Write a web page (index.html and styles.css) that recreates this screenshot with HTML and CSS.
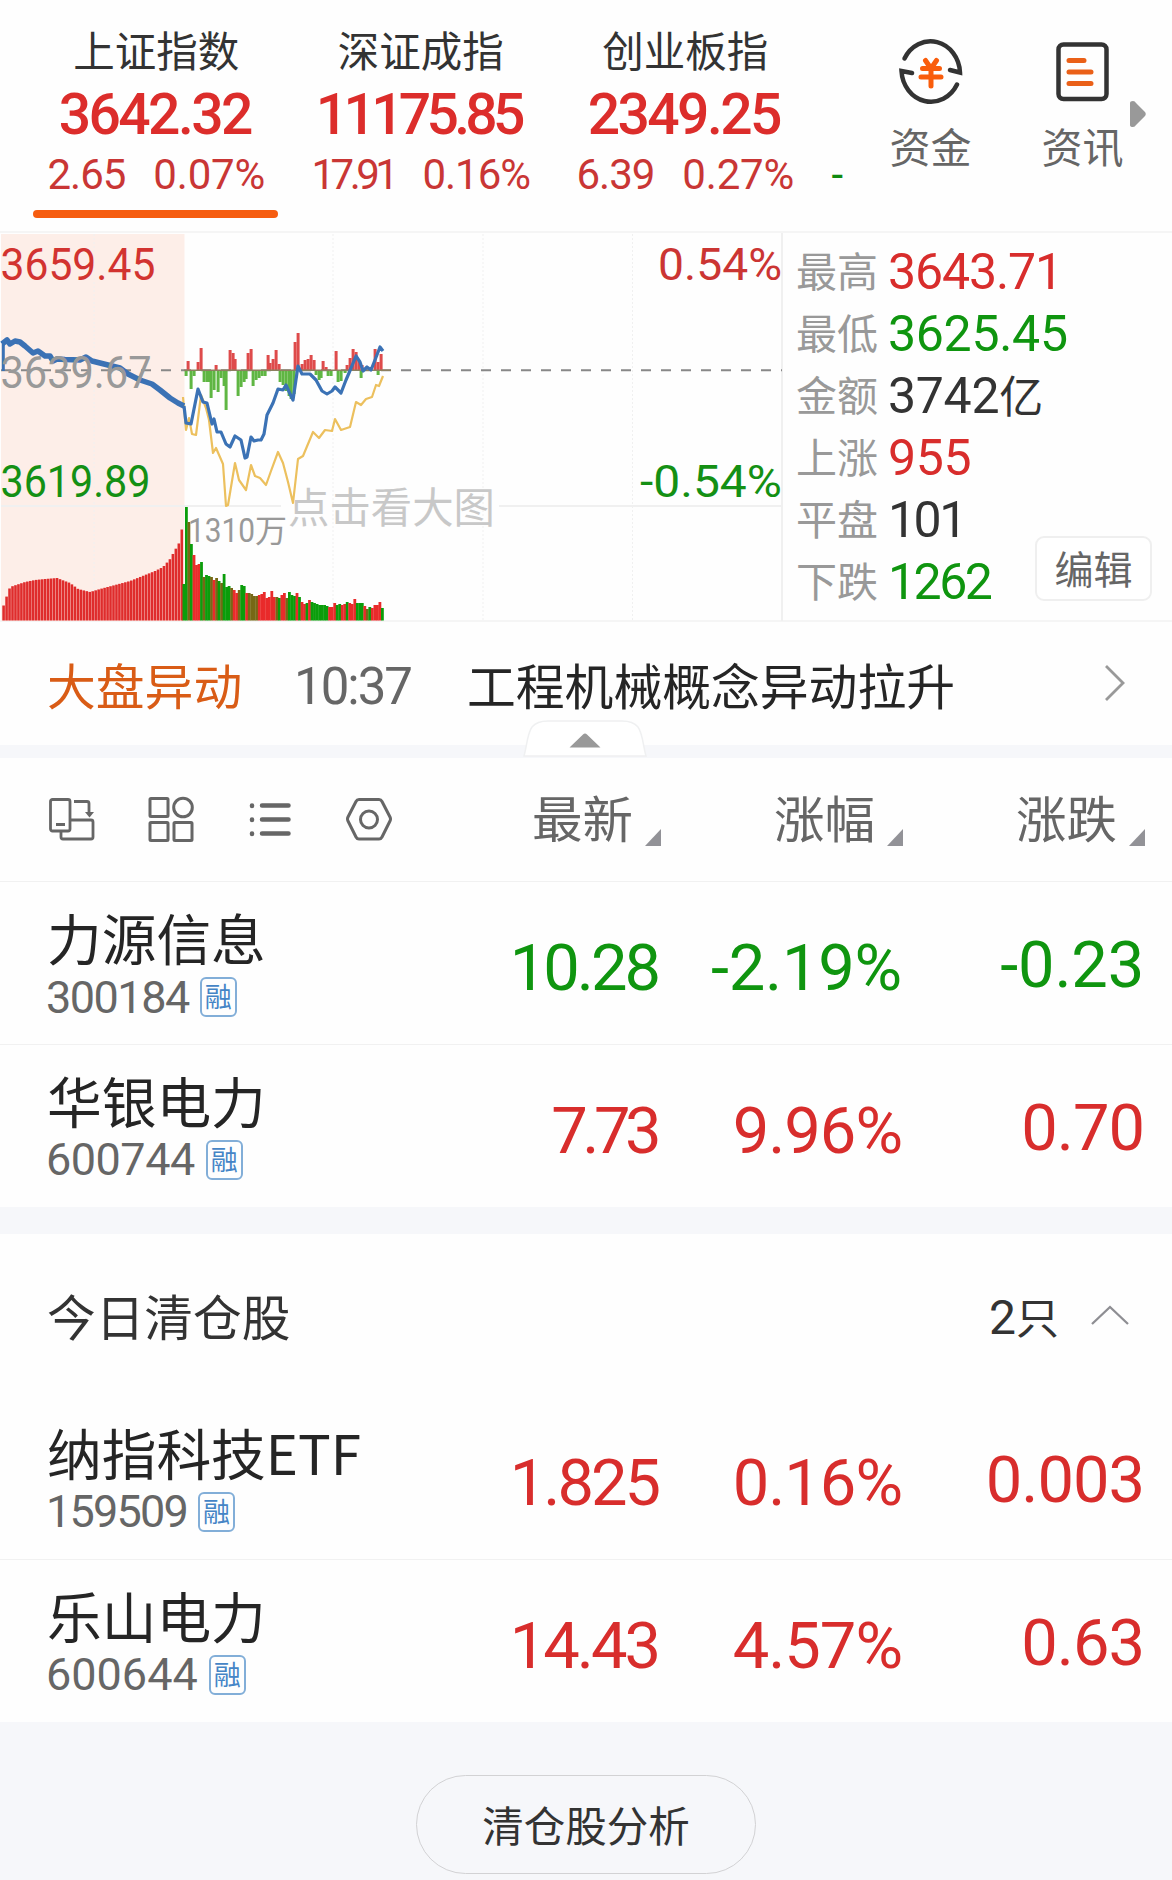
FILE: index.html
```html
<!DOCTYPE html>
<html lang="zh-CN">
<head>
  <meta charset="UTF-8" />
  <meta name="viewport" content="width=device-width, initial-scale=1.0"/>
  <title>自选股</title>
  <link rel="stylesheet" href="styles.css">
</head>

<body>
  <header class="index-bar">
    <div class="index-item active">
      <div class="index-name">上证指数</div>
      <div class="index-value">3642.32</div>
      <div class="index-sub"><span>2.65</span><span class="rate">0.07%</span></div>
    </div>
    <div class="index-item">
      <div class="index-name">深证成指</div>
      <div class="index-value long">11175.85</div>
      <div class="index-sub"><span class="tight">17.91</span><span>0.16%</span></div>
    </div>
    <div class="index-item">
      <div class="index-name">创业板指</div>
      <div class="index-value">2349.25</div>
      <div class="index-sub"><span>6.39</span><span class="rate">0.27%</span></div>
    </div>
    <div class="index-next">-</div>
    <a href="#" class="shortcut">
      <svg width="68" height="68" viewBox="0 0 68 68" fill="none" stroke="#333" stroke-width="4.5" stroke-linecap="round">
        <path d="M7.500 21.500A29.500 32.500 0 0 1 63 35.500L53 33"/>
        <path d="M60 47.500A29.500 32.500 0 0 1 4.500 34L15 36"/>
        <path d="M28.500 23.500l5.500 8 5.500-8M34 32v17M25.500 31.500h17M24 40h20" stroke="#f95d0c" stroke-width="5"/>
      </svg>
      资金
    </a>
    <a href="#" class="shortcut news">
      <svg width="68" height="68" viewBox="0 0 68 68" fill="none" stroke="#333" stroke-width="4.500" stroke-linecap="round">
        <rect x="9.500" y="7.500" width="48" height="54.500" rx="5"/>
        <path d="M20 23.500h15M20 35h22M20 46.500h22" stroke="#ea6018" stroke-width="5"/>
      </svg>
      资讯
    </a>
    <svg class="more" width="16" height="28" viewBox="0 0 16 28"><path d="M0 3Q0 1 3 1Q5 1 6 3L15 12Q16.500 14 15 16L6 25Q5 27 3 27Q0 27 0 25Z" fill="#999"/></svg>
  </header>

  <section class="market">
    <div class="chart">
      <svg id="chart" width="783" height="388" viewBox="0 233 783 388"></svg>
    </div>
    <div class="market-info">
      <dl>
        <div><dt>最高</dt><dd class="up high">3643.71</dd></div>
        <div><dt>最低</dt><dd class="down">3625.45</dd></div>
        <div><dt>金额</dt><dd>3742<span class="unit">亿</span></dd></div>
        <div><dt>上涨</dt><dd class="up">955</dd></div>
        <div><dt>平盘</dt><dd class="narrow">101</dd></div>
        <div><dt>下跌</dt><dd class="down narrow">1262</dd></div>
      </dl>
      <a href="#" class="edit">编辑</a>
    </div>
  </section>

  <section class="notice">
    <span class="notice-tag">大盘异动</span>
    <span class="notice-time">10:37</span>
    <span class="notice-text">工程机械概念异动拉升</span>
    <svg width="22" height="40" viewBox="0 0 22 40"><path d="M2 3l17 17L2 37" fill="none" stroke="#999" stroke-width="2.800"/></svg>
  </section>
  <div class="band fold">
    <svg class="fold-tab" width="126" height="40" viewBox="0 0 126 40">
      <path d="M2 38C5 28 5 16 10 9Q15 3 26 3H100Q111 3 116 9C121 16 121 28 124 38Z" fill="#fff" stroke="#eff0f1" stroke-width="1.500"/>
      <path d="M47.500 29.500L61 16.500Q63 14.500 65 16.500L78.500 29.500Z" fill="#999"/>
    </svg>
  </div>

  <section class="table-head">
    <div class="tools">
      <svg width="48" height="48" viewBox="0 0 48 48" fill="none" stroke="#666" stroke-width="2.800">
        <rect x="3.500" y="4.500" width="19.500" height="31.500" rx="2"/>
        <path d="M9 29.500h9M14 36v6q0 2 2 2h28q2 0 2-2V27q0-2-2-2H23M27 6.500h13q2 0 2 2V18"/>
        <path d="M38 17h9l-4.500 5.500z" fill="#666" stroke="none"/>
      </svg>
      <svg width="48" height="48" viewBox="0 0 48 48" fill="none" stroke="#666" stroke-width="3">
        <rect x="4" y="3.500" width="18" height="18" rx="1"/>
        <circle cx="37" cy="12.500" r="9.300"/>
        <rect x="4" y="27.500" width="18" height="18" rx="1"/>
        <rect x="28" y="27.500" width="18" height="18" rx="1"/>
      </svg>
      <svg width="48" height="48" viewBox="0 0 48 48" fill="none" stroke="#666" stroke-width="4.500" stroke-linecap="round">
        <path d="M17 10.500h26.500M17 24.500h26.500M17 38.500h26.500M7 10.500v.5M7 24.500v.5M7 38.500v.5"/>
      </svg>
      <svg width="48" height="48" viewBox="0 0 48 48" fill="none" stroke="#666" stroke-width="3" stroke-linejoin="round">
        <path d="M15 4.500H35Q37 4.500 38 6.500L46 22Q47 24 46 26L38 42Q37 44 35 44H15Q13 44 12 42L4 26Q3 24 4 22L12 6.500Q13 4.500 15 4.500Z"/>
        <circle cx="25" cy="24.500" r="8.500"/>
      </svg>
    </div>
    <div class="sort">最新</div>
    <div class="sort">涨幅</div>
    <div class="sort">涨跌</div>
  </section>

  <section class="stocks">
    <div class="stock down">
      <div class="stock-info">
        <div class="stock-name">力源信息</div>
        <div class="stock-code"><span class="c1">300184</span><i>融</i></div>
      </div>
      <div class="cell lean">10.28</div>
      <div class="cell wide">-2.19%</div>
      <div class="cell diff wide">-0.23</div>
    </div>
    <div class="stock up">
      <div class="stock-info">
        <div class="stock-name">华银电力</div>
        <div class="stock-code"><span>600744</span><i>融</i></div>
      </div>
      <div class="cell seven">7.73</div>
      <div class="cell">9.96%</div>
      <div class="cell diff">0.70</div>
    </div>
  </section>
  <div class="band wide"></div>

  <section class="cleared-head">
    <span>今日清仓股</span>
    <span class="cleared-count">2<em>只</em></span>
    <svg width="40" height="24" viewBox="0 0 40 24"><path d="M2 21L20 4l18 17" fill="none" stroke="#8e8e93" stroke-width="2.300"/></svg>
  </section>
  <section class="stocks">
    <div class="stock up">
      <div class="stock-info">
        <div class="stock-name">纳指科技<b>ETF</b></div>
        <div class="stock-code"><span class="c2">159509</span><i>融</i></div>
      </div>
      <div class="cell lean">1.825</div>
      <div class="cell">0.16%</div>
      <div class="cell diff">0.003</div>
    </div>
    <div class="stock up">
      <div class="stock-info">
        <div class="stock-name">乐山电力</div>
        <div class="stock-code"><span class="c3">600644</span><i>融</i></div>
      </div>
      <div class="cell lean">14.43</div>
      <div class="cell">4.57%</div>
      <div class="cell diff">0.63</div>
    </div>
  </section>

  <footer class="footer">
    <a href="#" class="analyse">清仓股分析</a>
  </footer>

  <script src="script.js"></script>
</body>
</html>
```
FILE: styles.css
```css
* {
  box-sizing: border-box;
}

body {
  margin: 0;
  font-family: "Noto Sans CJK SC", sans-serif;
  background-color: #fefefe;
  color: #333;
}

a {
  color: inherit;
  text-decoration: none;
}

.up {
  color: #d82d2c;
}

.down {
  color: #0f950f;
}

/* index bar */
.index-bar {
  display: flex;
  height: 233px;
  padding-left: 24px;
  border-bottom: 2px solid #f5f5f5;
  overflow: hidden;
}

.index-item {
  flex: none;
  width: 264.5px;
  padding-top: 24px;
  text-align: center;
}

.index-item.active::after {
  content: "";
  display: block;
  width: 245px;
  height: 8px;
  margin: 12px auto 0 9px;
  border-radius: 4px;
  background-color: #f65d10;
}

.index-name {
  height: 50px;
  line-height: 50px;
  font-size: 41.5px;
}

.index-value {
  height: 78px;
  padding-right: 3px;
  line-height: 81px;
  font-family: Roboto, sans-serif;
  font-weight: 500;
  font-size: 57px;
  letter-spacing: -2.6px;
  color: #dc2d2b;
}

.index-value.long {
  padding-right: 5px;
  letter-spacing: -4.7px;
}

.index-sub {
  display: flex;
  justify-content: center;
  gap: 28px;
  height: 46px;
  line-height: 45px;
  font-family: Roboto, sans-serif;
  font-size: 42px;
  letter-spacing: -1px;
  color: #c93635;
}

.index-sub .rate {
  letter-spacing: -.2px;
}

.index-sub .tight {
  letter-spacing: -4.5px;
}

.index-next {
  flex: none;
  width: 70px;
  padding: 153px 0 0 14px;
  line-height: 43px;
  font-family: Roboto, sans-serif;
  font-size: 42px;
  color: #0f8a0f;
}

.shortcut {
  flex: none;
  width: 86px;
  padding-top: 37px;
  text-align: center;
  font-size: 41px;
  line-height: 80px;
  color: #666;
}

.shortcut svg {
  display: block;
  margin: 0 auto;
}

.shortcut.news {
  margin-left: 66px;
}

.more {
  margin: 100px 0 0 4px;
}

/* market panel */
.market {
  display: flex;
  height: 389px;
  border-bottom: 2px solid #f5f5f5;
}

.chart {
  width: 783px;
}

.chart svg {
  display: block;
}

.chart text {
  font-family: Roboto, "Noto Sans CJK SC", sans-serif;
}

.market-info {
  position: relative;
  flex: 1;
  padding: 6px 0 0 13px;
}

.market-info dl {
  margin: 0;
}

.market-info dl div {
  display: flex;
  height: 62px;
}

.market-info dt {
  width: 92px;
  line-height: 60px;
  font-size: 41px;
  color: #999;
}

.market-info dd {
  margin: 0;
  line-height: 66px;
  font-family: Roboto, sans-serif;
  font-size: 50px;
  letter-spacing: -.3px;
}

.market-info dd.high {
  letter-spacing: -1.1px;
}

.market-info dd.narrow {
  letter-spacing: -2.5px;
}

.unit {
  font-family: "Noto Sans CJK SC", sans-serif;
  font-size: 44px;
  line-height: 60px;
}

.edit {
  position: absolute;
  right: 20px;
  bottom: 19px;
  width: 117px;
  height: 65px;
  border: 2px solid #efefef;
  border-radius: 9px;
  background-color: #fff;
  text-align: center;
  line-height: 59px;
  font-size: 39px;
  color: #666;
}

/* notice */
.notice {
  display: flex;
  align-items: center;
  height: 123px;
  padding: 0 46px 0 47px;
  font-size: 48.8px;
  line-height: 60px;
}

.notice svg {
  margin: -2px 0 0 auto;
}

.notice-tag {
  width: 247px;
  color: #d95c16;
}

.notice-time {
  width: 173px;
  padding-top: 6px;
  font-family: Roboto, sans-serif;
  font-size: 51px;
  letter-spacing: -2px;
  color: #666;
}

.notice-text {
  color: #252525;
}

.band {
  height: 13px;
  background-color: #f6f7fa;
}

.band.wide {
  height: 27px;
}

.fold {
  position: relative;
}

.fold-tab {
  position: absolute;
  left: 522px;
  bottom: 0;
}

/* table */
.table-head,
.stock {
  display: grid;
  grid-template-columns: 371px 242px 242px 242px;
  padding: 0 28px 0 47px;
  border-bottom: 1.5px solid #f1f1f1;
}

.table-head {
  height: 124px;
  align-items: center;
}

.tools {
  display: flex;
  gap: 51px;
  margin-top: -2px;
}

.sort {
  display: flex;
  justify-content: flex-end;
  align-items: flex-end;
  gap: 12px;
  margin: -7px -1px 0 0;
  font-size: 50.5px;
  line-height: 60px;
  color: #666;
}

.sort::after {
  content: "";
  border-left: 16px solid transparent;
  border-bottom: 17px solid #929297;
}

.stock {
  height: 162.7px;
}

.stocks .stock:last-child {
  border-bottom-color: transparent;
}

.stock-name {
  margin-top: 22px;
  height: 70px;
  line-height: 66px;
  font-size: 54.7px;
  color: #252525;
  white-space: nowrap;
}

.stock-name b {
  font-weight: 400;
}

.stock-code {
  display: flex;
  align-items: center;
  gap: 11px;
  height: 46px;
  margin-left: -1px;
  font-family: Roboto, sans-serif;
  font-size: 45px;
  letter-spacing: -.5px;
  color: #666;
}

.stock-code .c1 {
  letter-spacing: -1.5px;
}

.stock-code .c2 {
  letter-spacing: -1.8px;
}

.stock-code .c3 {
  letter-spacing: 0;
}

.stock-code i {
  width: 37px;
  height: 40px;
  border: 2px solid #82aed8;
  border-radius: 6px;
  font-family: "Noto Sans CJK SC", sans-serif;
  font-style: normal;
  font-size: 27px;
  line-height: 34px;
  letter-spacing: 0;
  text-align: center;
  color: #4585c6;
}

.cell {
  padding-top: 47px;
  text-align: right;
  font-family: Roboto, sans-serif;
  font-size: 65px;
  line-height: 78px;
  letter-spacing: -1px;
}

.cell.diff {
  padding-top: 44px;
}

.cell.wide {
  letter-spacing: -.2px;
}

.cell.lean {
  padding-right: 2px;
  letter-spacing: -3px;
}

.cell.seven {
  padding-right: 4px;
  letter-spacing: -5.500px;
}

.cleared-head {
  display: flex;
  align-items: center;
  height: 162.6px;
  padding: 0 42px 2px 47px;
  font-size: 48.7px;
}

.cleared-count {
  margin-left: auto;
  margin-right: 31px;
  font-family: Roboto, sans-serif;
  font-size: 48px;
}

.cleared-count em {
  font-family: "Noto Sans CJK SC", sans-serif;
  font-style: normal;
  font-size: 43px;
}

.footer {
  height: 158px;
  padding-top: 53px;
  background-color: #f6f7fa;
}

.analyse {
  display: block;
  width: 340px;
  height: 99px;
  margin: 0 auto;
  border: 1.5px solid #d2d2d4;
  border-radius: 50px;
  text-align: center;
  font-size: 41.5px;
  line-height: 96px;
}
```
FILE: script.js
```js
const svg = document.getElementById('chart');

function add(tag, attrs, text) {
  const el = document.createElementNS('http://www.w3.org/2000/svg', tag);
  for (const key in attrs) el.setAttribute(key, attrs[key]);
  if (text) el.textContent = text;
  svg.appendChild(el);
}

function line(points, color, width) {
  add('polyline', { points, fill: 'none', stroke: color, 'stroke-width': width, 'stroke-linejoin': 'round' });
}

// background and grid
add('rect', { x: 1, y: 234, width: 183.5, height: 387, fill: '#fdeee8' });
[94, 333, 483, 632.5].forEach(x => add('path', { d: `M${x} 234V620`, stroke: '#f0f0f0', 'stroke-dasharray': '2 2' }));
add('path', { d: 'M782 233V621M1 506H281M499 506H782', stroke: '#f0f0f0', 'stroke-width': 2 });
add('path', { d: 'M1 370.300H782', stroke: '#888', 'stroke-width': 2, 'stroke-dasharray': '10 10' });

// pre-market volume
const pre = [[3, 607], [7, 595], [10, 587], [16, 585], [25, 582], [35, 580], [45, 579], [57, 578], [62, 580], [70, 583],
  [78, 589], [90, 592], [100, 589], [115, 585], [130, 581], [145, 575], [155, 571], [163, 567], [170, 559], [175, 550], [179, 543], [181, 533]];
for (let x = 3.5; x < 183; x += 2.97) {
  let i = 0;
  while (i < pre.length - 2 && pre[i + 1][0] < x) i++;
  const [a, b] = [pre[i], pre[i + 1]];
  const y = a[1] + (b[1] - a[1]) * (x - a[0]) / (b[0] - a[0]);
  add('rect', { x: x - 1.2, y, width: 2.6, height: 620.5 - y, fill: '#df2c2c' });
}

// trading volume, g = down r = up m = mixed
const vol = 'g584 g507 m522 g544 r555 r565 r564 g562 m577 g575 g576 m577 r580 m578 g581 m583 g574 g587 g586 m588 r590 r593 m590 g585 g586 r593 m593 m594 m596 m596 r595 r594 r592 r598 r597 r591 r597 m597 g598 r595 r593 m598 g592 g595 g596 r593 g597 r602 r604 g603 r600 g602 g603 g604 g605 g605 g605 g606 r607 r607 r603 g605 g604 r605 r604 g602 r603 r604 r599 g603 g603 g603 r606 m609 g607 r608 r605 r605 r602 g608'.split(' ');
const fills = { g: '#0b9d0b', r: '#e92b2b', m: '#766816' };
const step = 201 / vol.length;
vol.forEach((v, i) => {
  const y = +v.slice(1);
  add('rect', { x: (183.5 + i * step - 1).toFixed(1), y, width: 2.8, height: 620.5 - y, fill: fills[v[0]] });
});

// momentum bars around the previous close
const ups = [[188, 9], [198, 8], [201, 22], [216, 5], [230, 20], [233, 17], [235, 11], [248, 17], [251, 21], [268, 15], [270, 7], [273, 11],
  [276, 20], [279, 6], [295, 28], [298, 37], [302, 6], [305, 10], [308, 11], [311, 15], [314, 10], [323, 9], [326, 3], [336, 19],
  [347, 5], [350, 12], [353, 21], [356, 18], [359, 9], [362, 5], [375, 21], [378, 8], [381, 16]];
const downs = [[186, 6], [191, 19], [194, 6], [204, 12], [207, 12], [209, 12], [211, 28], [214, 20], [218, 22], [221, 8], [224, 16],
  [226, 40], [238, 26], [241, 17], [244, 12], [246, 9], [253, 16], [256, 10], [259, 8], [262, 6], [265, 6], [280, 12], [283, 15],
  [286, 21], [289, 26], [291, 29], [294, 24], [316, 5], [319, 10], [321, 8], [328, 6], [331, 6], [338, 12], [341, 11], [345, 3], [361, 8], [378, 5]];
ups.forEach(([x, h]) => add('rect', { x: x - 1.4, y: 370 - h, width: 3, height: h, fill: '#de4b4b' }));
downs.forEach(([x, h]) => add('rect', { x: x - 1.4, y: 370, width: 3, height: h, fill: '#5fb643' }));
add('path', { d: 'M184 370.300H391', stroke: '#8d8060', 'stroke-width': 1.5 });

// price lines
line('183,397 186,430 189,418 192,434 196,435 201,395 206,408 209,420 213,453 216,448 223,464 226,506 228,505 235,463 239,480 246,490 251,465 255,476 260,478 266,485 271,471 278,452 283,463 288,482 293,503 298,459 303,456 313,432 319,438 325,430 332,431 335,419 341,430 350,427 356,402 361,405 366,399 372,397 376,385 379,386 383,376', '#ecc05e', 2.2);
line('3.300,371 3.300,344', '#3b72b5', 3);
line('2,344 7,340 10,344 15,341 20,342 25,346 33,353 38,351 45,356 50,356 53,361 57,359 65,359.500 80,360 86,357 92,361 108,365 120,368 128,374 140,380 152,384 160,390 170,398 178,403 184,406', '#3b72b5', 5.5);
line('184,406 186,423 191,424 198,389 203,402 207,403 212,424 214,419 217,432 221,432 226,444 230,447 235,436 241,440 245,458 247,457 251,437 254,441 258,440 261,440 264,434 267,415 273,403 278,389 283,390 286,385 291,396 293,400 298,366 302,374 310,374 316,380 322,391 327,394 332,391 335,387 341,393 346,380 349,373 356,356 360,362 363,371 367,367 371,370 375,360 380,347 383,351', '#3b72b5', 3.2);

// labels, each one fitted to its length
function label(text, x, y, size, color, length) {
  add('text', { x, y, 'font-size': size, fill: color, textLength: length, lengthAdjust: 'spacingAndGlyphs' }, text);
}
label('3659.45', 0.5, 279.5, 44, '#d23330', 155);
label('3639.67', 0.5, 387.5, 44, '#999', 151);
label('3619.89', 0.5, 496.5, 44, '#149014', 150);
label('0.54%', 658, 279.5, 44, '#cb3533', 124);
label('-0.54%', 640, 496.5, 44, '#149014', 142);
label('1310', 188, 541.5, 34, '#999', 67);
label('万', 255, 541.5, 32, '#999', 32);
label('点击看大图', 288, 523, 41.5, '#c8c8c8', 207);
```
